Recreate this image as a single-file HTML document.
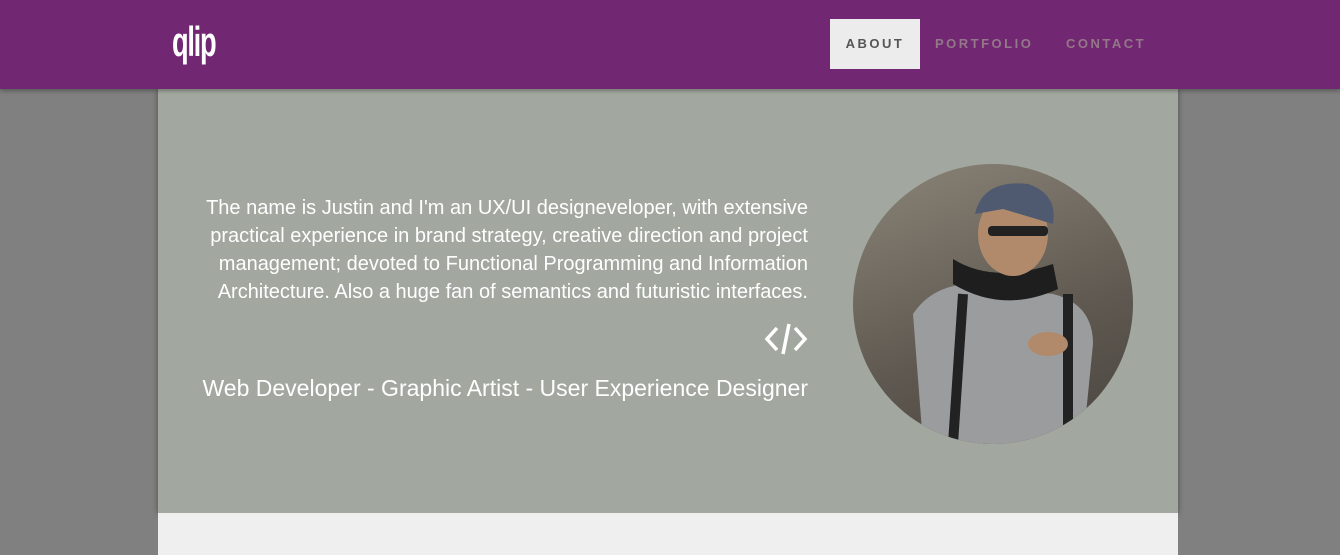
<!DOCTYPE html>
<html><head><style>
body{margin:0;width:1340px;height:555px;overflow:hidden;background:#808080;font-family:"Liberation Sans",sans-serif;position:relative}
.hdr{position:absolute;left:0;top:0;width:1340px;height:89px;background:#722772;box-shadow:0 2px 4px rgba(0,0,0,.3);z-index:2}
.logo{position:absolute;left:172px;top:18px;color:#fff;font-size:42px;font-weight:bold;letter-spacing:-2px;transform:scaleX(.65);transform-origin:left}
.nav{position:absolute;top:19px;height:50px;line-height:50px;font-size:13px;font-weight:bold;letter-spacing:2.5px;color:#927888}
.hero{position:absolute;left:158px;top:89px;width:1020px;height:424px;background:#a2a89f;box-shadow:0 0 6px rgba(0,0,0,.4)}
.bot{position:absolute;left:158px;top:513px;width:1020px;height:42px;background:#efefef}
.txt{position:absolute;right:370px;top:105px;width:608px;text-align:right;color:#fff;font-size:20px;line-height:28px}
.sub{position:absolute;right:370px;top:286px;color:#fff;font-size:23px;white-space:nowrap}
.photo{position:absolute;left:695px;top:75px;width:280px;height:280px;border-radius:50%;overflow:hidden;background:linear-gradient(160deg,#8a8478,#5e5850 60%,#4a4540)}
</style></head><body>
<div class="hdr">
<div class="logo">qlip</div>
<div class="nav" style="left:830px;width:90px;background:#ececec;color:#555;text-align:center">ABOUT</div>
<div class="nav" style="left:935px">PORTFOLIO</div>
<div class="nav" style="left:1066px">CONTACT</div>
</div>
<div class="hero">
<div class="txt">The name is Justin and I'm an UX/UI designeveloper, with extensive practical experience in brand strategy, creative direction and project management; devoted to Functional Programming and Information Architecture. Also a huge fan of semantics and futuristic interfaces.</div>
<svg style="position:absolute;left:605px;top:232px" width="46" height="36" viewBox="0 0 46 36"><g fill="none" stroke="#fff" stroke-width="3.5"><path d="M14 7 4 18 14 29"/><path d="M32 7 42 18 32 29"/><path d="M26 3 20 33"/></g></svg>
<div class="sub">Web Developer - Graphic Artist - User Experience Designer</div>
<div class="photo">
<svg width="280" height="280" viewBox="0 0 280 280">
<path d="M60 150 Q80 120 120 120 L200 130 Q240 140 240 180 L230 280 L70 280 Z" fill="#9a9c9e"/>
<path d="M100 95 Q140 120 200 100 L205 125 Q150 150 100 120 Z" fill="#1e1e1e"/>
<ellipse cx="160" cy="70" rx="35" ry="42" fill="#b08a6a"/>
<path d="M122 50 Q130 15 175 20 Q205 30 200 60 L150 45 Z" fill="#4f5a70"/>
<rect x="135" y="62" width="60" height="10" rx="4" fill="#222"/>
<path d="M110 130 L100 280 M215 130 L215 270" stroke="#222" stroke-width="10"/>
<ellipse cx="195" cy="180" rx="20" ry="12" fill="#b08a6a"/>
</svg></div>
</div>
<div class="bot"></div>
</body></html>
